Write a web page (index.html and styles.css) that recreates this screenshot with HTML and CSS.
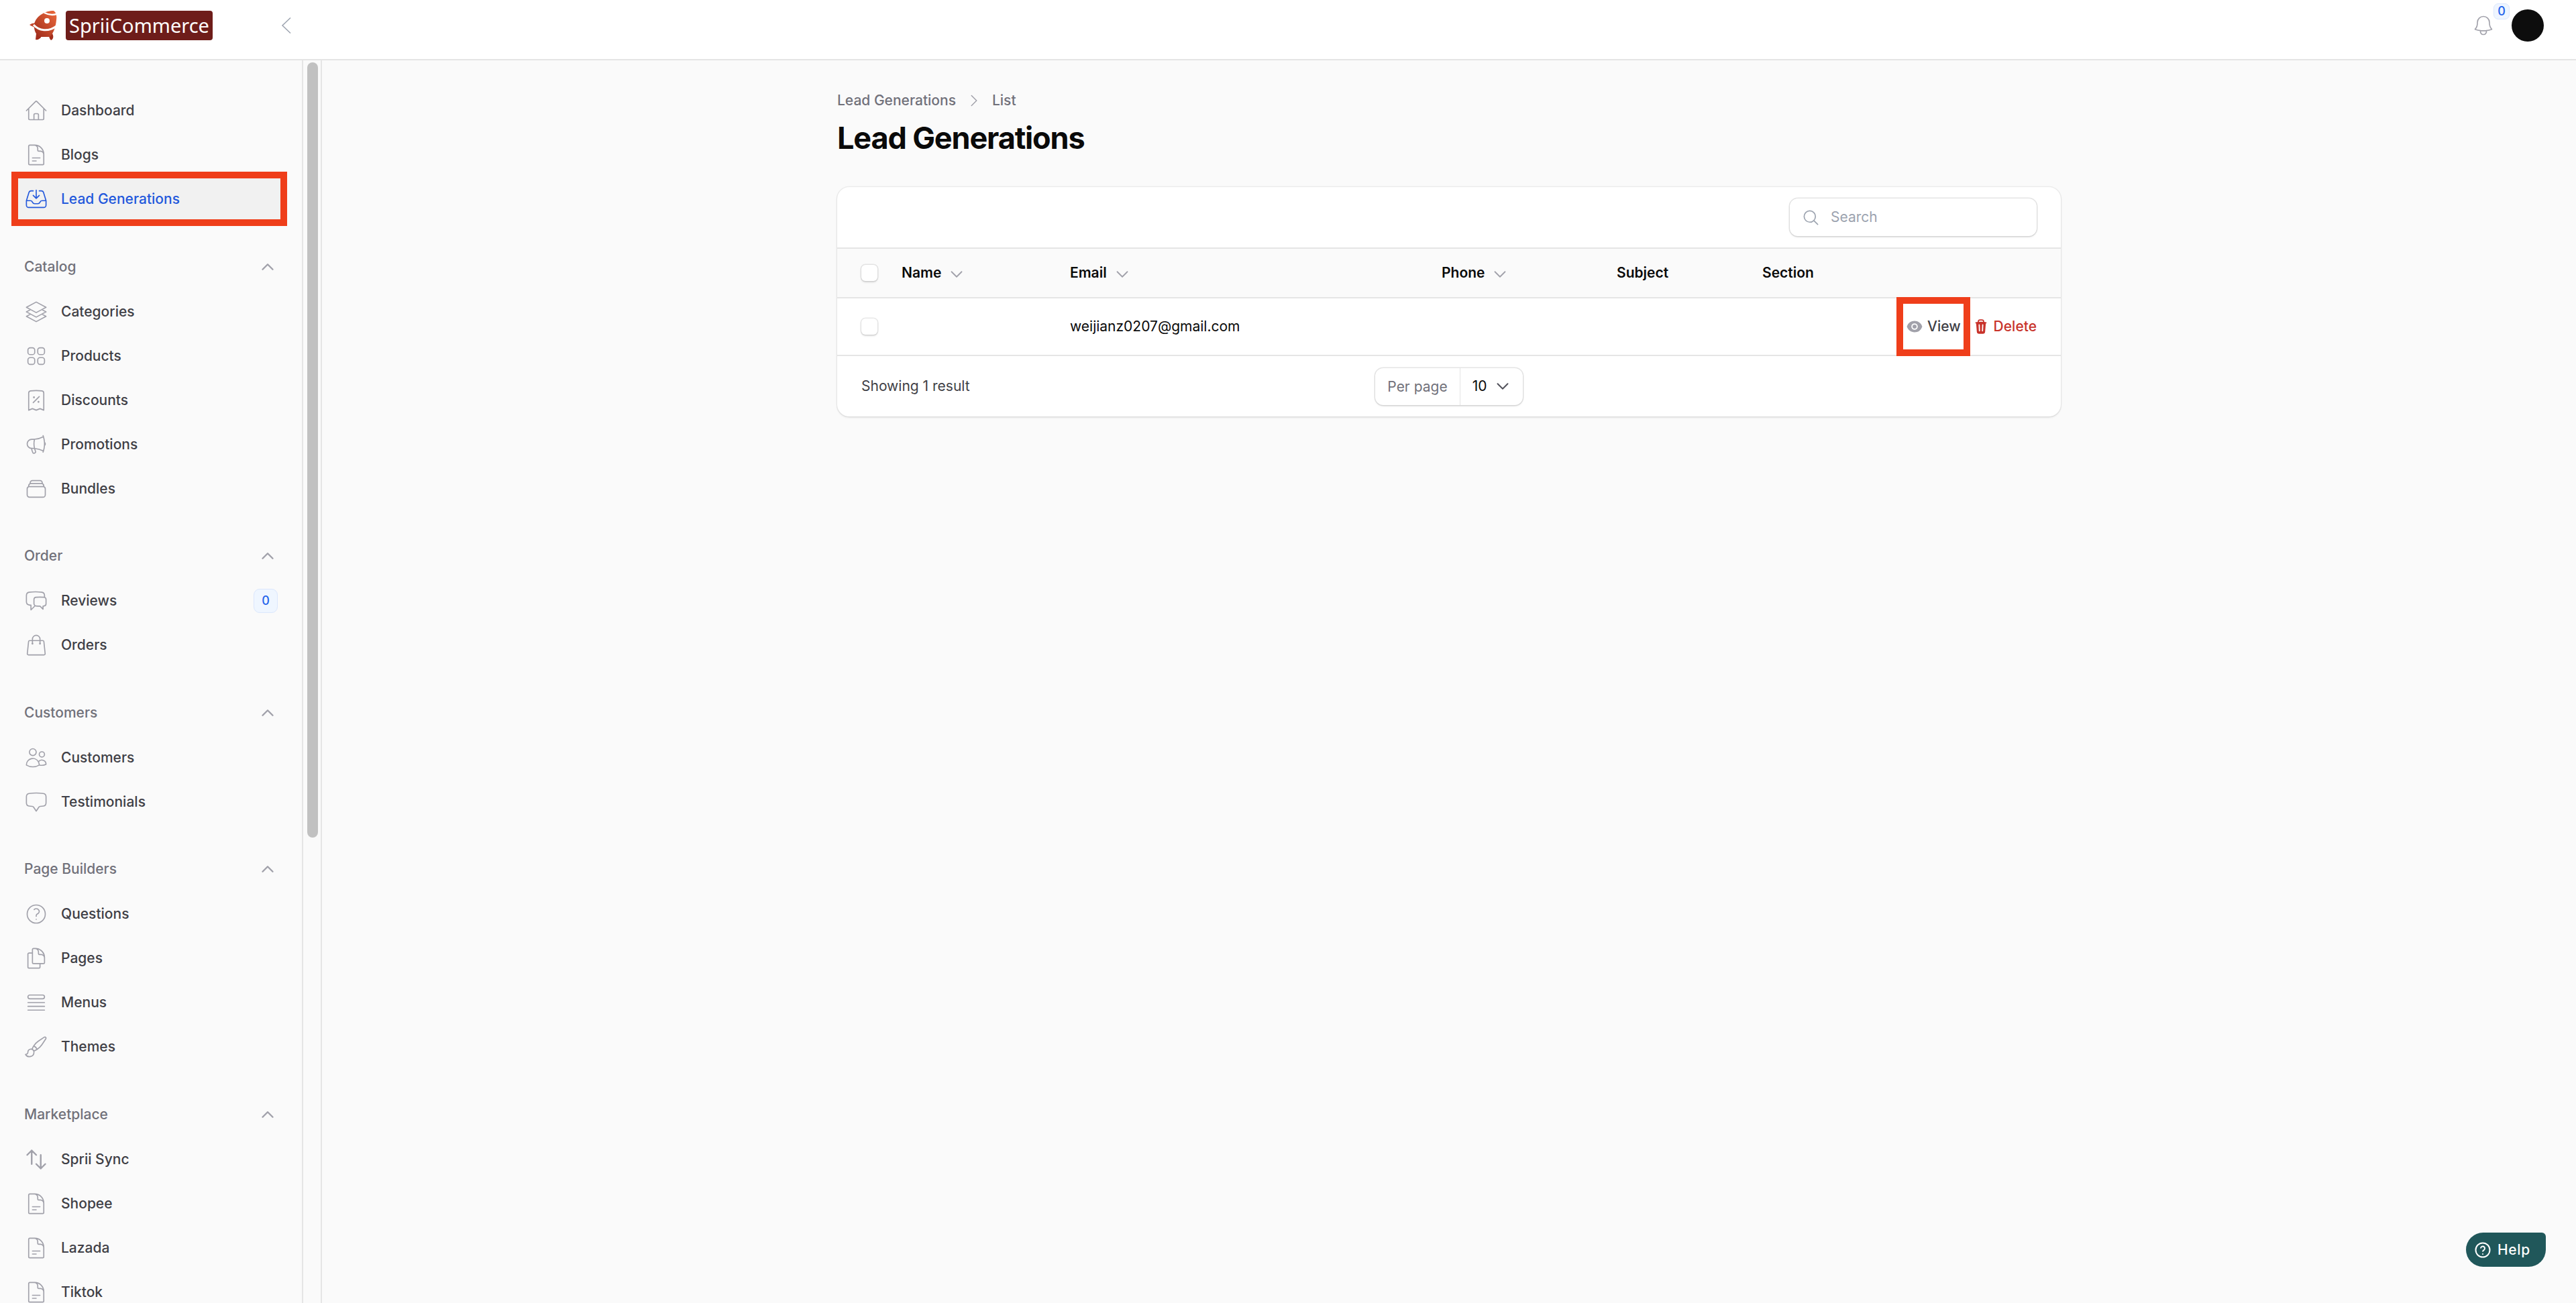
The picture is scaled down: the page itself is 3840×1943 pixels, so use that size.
FILE: index.html
```html
<!DOCTYPE html>
<html lang="en">
<head>
    <meta charset="UTF-8">
    <meta name="viewport" content="width=device-width, initial-scale=1.0">
    <title>Lead Generations - SpriiCommerce</title>
    <link rel="stylesheet" href="styles.css">
</head>
<body>
    <!-- icon sprite -->
    <svg class="sprite" aria-hidden="true">
        <symbol id="i-home" viewBox="0 0 24 24"><path d="M2.25 12l8.954-8.955c.44-.439 1.152-.439 1.591 0L21.75 12M4.5 9.75v10.125c0 .621.504 1.125 1.125 1.125H9.75v-4.875c0-.621.504-1.125 1.125-1.125h2.25c.621 0 1.125.504 1.125 1.125V21h4.125c.621 0 1.125-.504 1.125-1.125V9.75M8.25 21h8.25"/></symbol>
        <symbol id="i-doc" viewBox="0 0 24 24"><path d="M19.5 14.25v-2.625a3.375 3.375 0 00-3.375-3.375h-1.5A1.125 1.125 0 0113.5 7.125v-1.5a3.375 3.375 0 00-3.375-3.375H8.25m0 12.75h7.5m-7.5 3H12M10.5 2.25H5.625c-.621 0-1.125.504-1.125 1.125v17.25c0 .621.504 1.125 1.125 1.125h12.75c.621 0 1.125-.504 1.125-1.125V11.25a9 9 0 00-9-9z"/></symbol>
        <symbol id="i-inbox" viewBox="0 0 24 24"><path d="M9 3.75H6.912a2.25 2.25 0 00-2.15 1.588L2.35 13.177a2.25 2.25 0 00-.1.661V18a2.25 2.25 0 002.25 2.25h15A2.25 2.25 0 0021.75 18v-4.162c0-.224-.034-.447-.1-.661L19.24 5.338a2.25 2.25 0 00-2.15-1.588H15M2.25 13.5h3.86a2.25 2.25 0 012.012 1.244l.256.512a2.25 2.25 0 002.013 1.244h3.218a2.25 2.25 0 002.013-1.244l.256-.512a2.25 2.25 0 012.013-1.244h3.859M12 3v8.25m0 0l-3-3m3 3l3-3"/></symbol>
        <symbol id="i-stack" viewBox="0 0 24 24"><path d="M6.429 9.75L2.25 12l4.179 2.25m0-4.5l5.571 3 5.571-3m-11.142 0L2.25 7.5 12 2.25l9.75 5.25-4.179 2.25m0 0L21.75 12l-4.179 2.25m0 0l4.179 2.25L12 21.75 2.25 16.5l4.179-2.25m11.142 0l-5.571 3-5.571-3"/></symbol>
        <symbol id="i-squares" viewBox="0 0 24 24"><path d="M3.75 6A2.25 2.25 0 016 3.75h2.25A2.25 2.25 0 0110.5 6v2.25a2.25 2.25 0 01-2.25 2.25H6a2.25 2.25 0 01-2.25-2.25V6zM3.75 15.75A2.25 2.25 0 016 13.5h2.25a2.25 2.25 0 012.25 2.25V18a2.25 2.25 0 01-2.25 2.25H6A2.25 2.25 0 013.75 18v-2.25zM13.5 6a2.25 2.25 0 012.25-2.25H18A2.25 2.25 0 0120.25 6v2.25A2.25 2.25 0 0118 10.5h-2.25a2.25 2.25 0 01-2.25-2.25V6zM13.5 15.75a2.25 2.25 0 012.25-2.25H18a2.25 2.25 0 012.25 2.25V18A2.25 2.25 0 0118 20.25h-2.25A2.25 2.25 0 0113.5 18v-2.25z"/></symbol>
        <symbol id="i-receipt" viewBox="0 0 24 24"><path d="M9 14.25l6-6m4.5-3.493V21.75l-3.75-1.5-3.75 1.5-3.75-1.5-3.75 1.5V4.757c0-1.108.806-2.057 1.907-2.185a48.507 48.507 0 0111.186 0c1.1.128 1.907 1.077 1.907 2.185zM9.75 9h.008v.008H9.75V9zm.375 0a.375.375 0 11-.75 0 .375.375 0 01.75 0zm4.125 4.5h.008v.008h-.008V13.5zm.375 0a.375.375 0 11-.75 0 .375.375 0 01.75 0z"/></symbol>
        <symbol id="i-megaphone" viewBox="0 0 24 24"><path d="M10.34 15.84c-.688-.06-1.386-.09-2.09-.09H7.5a4.5 4.5 0 110-9h.75c.704 0 1.402-.03 2.09-.09m0 9.18c.253.962.584 1.892.985 2.783.247.55.06 1.21-.463 1.511l-.657.38c-.551.318-1.26.117-1.527-.461a20.845 20.845 0 01-1.44-4.282m3.102.069a18.03 18.03 0 01-.59-4.59c0-1.586.205-3.124.59-4.59m0 9.18a23.848 23.848 0 018.835 2.535M10.34 6.66a23.847 23.847 0 008.835-2.535m0 0A23.74 23.74 0 0018.795 3m.38 1.125a23.91 23.91 0 011.014 5.395m-1.014 8.855c-.118.38-.245.754-.38 1.125m.38-1.125a23.91 23.91 0 001.014-5.395m0-3.46c.495.413.811 1.035.811 1.73 0 .695-.316 1.317-.811 1.73m0-3.46a24.347 24.347 0 010 3.46"/></symbol>
        <symbol id="i-rect-stack" viewBox="0 0 24 24"><path d="M6 6.878V6a2.25 2.25 0 012.25-2.25h7.5A2.25 2.25 0 0118 6v.878m-12 0c.235-.083.487-.128.75-.128h10.5c.263 0 .515.045.75.128m-12 0A2.25 2.25 0 004.5 9v.878m13.5-3A2.25 2.25 0 0119.5 9v.878m0 0a2.246 2.246 0 00-.75-.128H5.25c-.263 0-.515.045-.75.128m15 0A2.25 2.25 0 0121 12v6a2.25 2.25 0 01-2.25 2.25H5.25A2.25 2.25 0 013 18v-6c0-.98.626-1.813 1.5-2.122"/></symbol>
        <symbol id="i-chats" viewBox="0 0 24 24"><path d="M20.25 8.511c.884.284 1.5 1.128 1.5 2.097v4.286c0 1.136-.847 2.1-1.98 2.193-.34.027-.68.052-1.02.072v3.091l-3-3c-1.354 0-2.694-.055-4.02-.163a2.115 2.115 0 01-.825-.242m9.345-8.334a2.126 2.126 0 00-.476-.095 48.64 48.64 0 00-8.048 0c-1.131.094-1.976 1.057-1.976 2.192v4.286c0 .837.46 1.58 1.155 1.951m9.345-8.334V6.637c0-1.621-1.152-3.026-2.76-3.235A48.455 48.455 0 0011.25 3c-2.115 0-4.198.137-6.24.402-1.608.209-2.76 1.614-2.76 3.235v6.226c0 1.621 1.152 3.026 2.76 3.235.577.075 1.157.14 1.74.194V21l4.155-4.155"/></symbol>
        <symbol id="i-bag" viewBox="0 0 24 24"><path d="M15.75 10.5V6a3.75 3.75 0 10-7.5 0v4.5m11.356-1.993l1.263 12c.07.665-.45 1.243-1.119 1.243H4.25a1.125 1.125 0 01-1.12-1.243l1.264-12A1.125 1.125 0 015.513 7.5h12.974c.576 0 1.059.435 1.119 1.007zM8.625 10.5a.375.375 0 11-.75 0 .375.375 0 01.75 0zm7.5 0a.375.375 0 11-.75 0 .375.375 0 01.75 0z"/></symbol>
        <symbol id="i-users" viewBox="0 0 24 24"><path d="M15 19.128a9.38 9.38 0 002.625.372 9.337 9.337 0 004.121-.952 4.125 4.125 0 00-7.533-2.493M15 19.128v-.003c0-1.113-.285-2.16-.786-3.07M15 19.128v.106A12.318 12.318 0 018.624 21c-2.331 0-4.512-.645-6.374-1.766l-.001-.109a6.375 6.375 0 0111.964-3.07M12 6.375a3.375 3.375 0 11-6.75 0 3.375 3.375 0 016.75 0zm8.25 2.25a2.625 2.625 0 11-5.25 0 2.625 2.625 0 015.25 0z"/></symbol>
        <symbol id="i-chat" viewBox="0 0 24 24"><path d="M2.25 12.76c0 1.6 1.123 2.994 2.707 3.227 1.068.157 2.148.279 3.238.364.466.037.893.281 1.153.671L12 21l2.652-3.978c.26-.39.687-.634 1.153-.67 1.09-.086 2.17-.208 3.238-.365 1.584-.233 2.707-1.626 2.707-3.228V6.741c0-1.602-1.123-2.995-2.707-3.228A48.394 48.394 0 0012 3c-2.392 0-4.744.175-7.043.513C3.373 3.746 2.25 5.14 2.25 6.741v6.018z"/></symbol>
        <symbol id="i-question" viewBox="0 0 24 24"><path d="M9.879 7.519c1.171-1.025 3.071-1.025 4.242 0 1.172 1.025 1.172 2.687 0 3.712-.203.179-.43.326-.67.442-.745.361-1.45.999-1.45 1.827v.75M21 12a9 9 0 11-18 0 9 9 0 0118 0zm-9 5.25h.008v.008H12v-.008z"/></symbol>
        <symbol id="i-pages" viewBox="0 0 24 24"><path d="M15.75 17.25v3.375c0 .621-.504 1.125-1.125 1.125h-9.75a1.125 1.125 0 01-1.125-1.125V7.875c0-.621.504-1.125 1.125-1.125H6.75a9.06 9.06 0 011.5.124m7.5 10.376h3.375c.621 0 1.125-.504 1.125-1.125V11.25c0-4.46-3.243-8.161-7.5-8.876a9.06 9.06 0 00-1.5-.124H9.375c-.621 0-1.125.504-1.125 1.125v3.5m7.5 10.375H9.375a1.125 1.125 0 01-1.125-1.125v-9.25m12 6.625v-1.875a3.375 3.375 0 00-3.375-3.375h-1.5a1.125 1.125 0 01-1.125-1.125v-1.5a3.375 3.375 0 00-3.375-3.375H9.75"/></symbol>
        <symbol id="i-queue" viewBox="0 0 24 24"><path d="M3.75 12h16.5m-16.5 3.75h16.5m-16.5 3.75h16.5M5.625 4.5h12.75a1.875 1.875 0 010 3.75H5.625a1.875 1.875 0 010-3.75z"/></symbol>
        <symbol id="i-brush" viewBox="0 0 24 24"><path d="M9.53 16.122a3 3 0 00-5.78 1.128 2.25 2.25 0 01-2.4 2.245 4.5 4.5 0 008.4-2.245c0-.399-.078-.78-.22-1.128zm0 0a15.998 15.998 0 003.388-1.62m-5.043-.025a15.994 15.994 0 011.622-3.395m3.42 3.42a15.995 15.995 0 004.764-4.648l3.876-5.814a1.151 1.151 0 00-1.597-1.597L14.146 6.32a15.996 15.996 0 00-4.649 4.763m3.42 3.42a6.776 6.776 0 00-3.42-3.42"/></symbol>
        <symbol id="i-updown" viewBox="0 0 24 24"><path d="M3 7.5L7.5 3m0 0L12 7.5M7.5 3v13.5m13.5 0L16.5 21m0 0L12 16.5m4.5 4.5V7.5"/></symbol>
        <symbol id="i-bell" viewBox="0 0 24 24"><path d="M14.857 17.082a23.848 23.848 0 005.454-1.31A8.967 8.967 0 0118 9.75v-.7V9A6 6 0 006 9v.75a8.967 8.967 0 01-2.312 6.022c1.733.64 3.56 1.085 5.455 1.31m5.714 0a24.255 24.255 0 01-5.714 0m5.714 0a3 3 0 11-5.714 0"/></symbol>
        <symbol id="i-search" viewBox="0 0 24 24"><path d="M21 21l-5.197-5.197m0 0A7.5 7.5 0 105.196 5.196a7.5 7.5 0 0010.607 10.607z"/></symbol>
        <symbol id="i-up" viewBox="0 0 24 24"><path d="M4.5 15.75l7.5-7.5 7.5 7.5"/></symbol>
        <symbol id="i-down" viewBox="0 0 24 24"><path d="M19.5 8.25l-7.5 7.5-7.5-7.5"/></symbol>
    </svg>

    <header class="topbar">
        <svg class="rocket" viewBox="0 0 41 44">
            <defs>
                <linearGradient id="rocket-fill" x1="1" y1="0" x2="0" y2="1">
                    <stop offset="0" stop-color="#ee6a3c"/>
                    <stop offset="1" stop-color="#9c2a1a"/>
                </linearGradient>
            </defs>
            <path d="M0 21c4-3 8-3 10-2l1 9c-4-4-8-5-11-7z" fill="#c2452a"/>
            <path d="M10 34l8 4c-2 4-6 6-9 5z" fill="#a32d1c"/>
            <path d="M29 36l5-2c2 4 2 8-2 10-2-2-3-4-3-8z" fill="#a32d1c"/>
            <path d="M36 0C24 0 10 7 7 20c-1 9 3 18 10 19h13c5-4 9-14 10-25 1-6 0-11-4-14z" fill="url(#rocket-fill)"/>
            <path d="M22 3c6 3 12 4 18 2" fill="none" stroke="#fff" stroke-width="2.5"/>
            <path d="M6 21c8 9 22 11 34 2" fill="none" stroke="#fff" stroke-width="3"/>
            <circle cx="26" cy="15" r="4" fill="#fff"/>
        </svg>
        <div class="brand">SpriiCommerce</div>
        <svg class="collapse-toggle" viewBox="0 0 16 26"><path d="M14 1.5L2 13l12 11.5"/></svg>
        <div class="topbar-right">
            <div class="bell">
                <svg class="icon icon-bell"><use href="#i-bell"/></svg>
                <span class="badge bell-badge">0</span>
            </div>
            <div class="avatar"></div>
        </div>
    </header>

    <div class="layout">
        <aside class="sidebar">
            <nav class="nav-group">
                <a class="nav-item"><svg class="icon"><use href="#i-home"/></svg><span>Dashboard</span></a>
                <a class="nav-item"><svg class="icon"><use href="#i-doc"/></svg><span>Blogs</span></a>
                <a class="nav-item active"><svg class="icon"><use href="#i-inbox"/></svg><span>Lead Generations</span><i class="callout nav-callout"></i></a>
            </nav>

            <nav class="nav-group">
                <div class="nav-label">Catalog<svg class="icon-sm"><use href="#i-up"/></svg></div>
                <a class="nav-item"><svg class="icon"><use href="#i-stack"/></svg><span>Categories</span></a>
                <a class="nav-item"><svg class="icon"><use href="#i-squares"/></svg><span>Products</span></a>
                <a class="nav-item"><svg class="icon"><use href="#i-receipt"/></svg><span>Discounts</span></a>
                <a class="nav-item"><svg class="icon"><use href="#i-megaphone"/></svg><span>Promotions</span></a>
                <a class="nav-item"><svg class="icon"><use href="#i-rect-stack"/></svg><span>Bundles</span></a>
            </nav>

            <nav class="nav-group">
                <div class="nav-label">Order<svg class="icon-sm"><use href="#i-up"/></svg></div>
                <a class="nav-item"><svg class="icon"><use href="#i-chats"/></svg><span>Reviews</span><span class="badge nav-badge">0</span></a>
                <a class="nav-item"><svg class="icon"><use href="#i-bag"/></svg><span>Orders</span></a>
            </nav>

            <nav class="nav-group">
                <div class="nav-label">Customers<svg class="icon-sm"><use href="#i-up"/></svg></div>
                <a class="nav-item"><svg class="icon"><use href="#i-users"/></svg><span>Customers</span></a>
                <a class="nav-item"><svg class="icon"><use href="#i-chat"/></svg><span>Testimonials</span></a>
            </nav>

            <nav class="nav-group">
                <div class="nav-label">Page Builders<svg class="icon-sm"><use href="#i-up"/></svg></div>
                <a class="nav-item"><svg class="icon"><use href="#i-question"/></svg><span>Questions</span></a>
                <a class="nav-item"><svg class="icon"><use href="#i-pages"/></svg><span>Pages</span></a>
                <a class="nav-item"><svg class="icon"><use href="#i-queue"/></svg><span>Menus</span></a>
                <a class="nav-item"><svg class="icon"><use href="#i-brush"/></svg><span>Themes</span></a>
            </nav>

            <nav class="nav-group">
                <div class="nav-label">Marketplace<svg class="icon-sm"><use href="#i-up"/></svg></div>
                <a class="nav-item"><svg class="icon icon-bold"><use href="#i-updown"/></svg><span>Sprii Sync</span></a>
                <a class="nav-item"><svg class="icon"><use href="#i-doc"/></svg><span>Shopee</span></a>
                <a class="nav-item"><svg class="icon"><use href="#i-doc"/></svg><span>Lazada</span></a>
                <a class="nav-item"><svg class="icon"><use href="#i-doc"/></svg><span>Tiktok</span></a>
            </nav>
        </aside>

        <div class="scroll-track"><div class="scroll-thumb"></div></div>

        <main class="main">
            <div class="content">
                <div class="breadcrumb">
                    <span>Lead Generations</span>
                    <svg class="crumb-sep"><use href="#i-up"/></svg>
                    <span>List</span>
                </div>
                <h1 class="page-title">Lead Generations</h1>

                <section class="card">
                    <div class="toolbar">
                        <div class="search">
                            <svg class="icon icon-search"><use href="#i-search"/></svg>
                            <span>Search</span>
                        </div>
                    </div>
                    <table class="leads">
                        <colgroup>
                            <col class="col-check"><col class="col-name"><col class="col-email"><col class="col-phone"><col class="col-subject"><col class="col-section"><col>
                        </colgroup>
                        <thead>
                            <tr>
                                <th class="check-cell"><span class="checkbox"></span></th>
                                <th><span class="sort">Name<svg class="icon-sort"><use href="#i-down"/></svg></span></th>
                                <th><span class="sort">Email<svg class="icon-sort"><use href="#i-down"/></svg></span></th>
                                <th><span class="sort">Phone<svg class="icon-sort"><use href="#i-down"/></svg></span></th>
                                <th>Subject</th>
                                <th>Section</th>
                                <th></th>
                            </tr>
                        </thead>
                        <tbody>
                            <tr>
                                <td class="check-cell"><span class="checkbox"></span></td>
                                <td></td>
                                <td>weijianz0207@gmail.com</td>
                                <td></td>
                                <td></td>
                                <td></td>
                                <td>
                                    <div class="actions">
                                        <a class="action action-view">
                                            <svg class="action-icon" viewBox="0 0 20 20"><path d="M10 12.5a2.5 2.5 0 100-5 2.5 2.5 0 000 5z"/><path fill-rule="evenodd" d="M.664 10.59a1.651 1.651 0 010-1.186A10.004 10.004 0 0110 3c4.257 0 7.893 2.66 9.336 6.41.147.381.146.804 0 1.186A10.004 10.004 0 0110 17c-4.257 0-7.893-2.66-9.336-6.41zM14 10a4 4 0 11-8 0 4 4 0 018 0z"/></svg>
                                            View
                                            <i class="callout view-callout"></i>
                                        </a>
                                        <a class="action action-delete">
                                            <svg class="action-icon" viewBox="0 0 20 20"><path fill-rule="evenodd" d="M8.75 1A2.75 2.75 0 006 3.75v.443c-.795.077-1.584.176-2.365.298a.75.75 0 10.23 1.482l.149-.022.841 10.518A2.75 2.75 0 007.596 19h4.807a2.75 2.75 0 002.742-2.53l.841-10.52.149.023a.75.75 0 00.23-1.482A41.03 41.03 0 0014 4.193V3.75A2.75 2.75 0 0011.25 1h-2.5zM10 4c.84 0 1.673.025 2.5.075V3.75c0-.69-.56-1.25-1.25-1.25h-2.5c-.69 0-1.25.56-1.25 1.25v.325C8.327 4.025 9.16 4 10 4zM8.58 7.72a.75.75 0 00-1.5.06l.3 7.5a.75.75 0 101.5-.06l-.3-7.5zm4.34.06a.75.75 0 10-1.5-.06l-.3 7.5a.75.75 0 101.5.06l.3-7.5z"/></svg>
                                            Delete
                                        </a>
                                    </div>
                                </td>
                            </tr>
                        </tbody>
                    </table>
                    <div class="table-footer">
                        <span>Showing 1 result</span>
                        <div class="per-page">
                            <span class="per-page-label">Per page</span>
                            <span class="per-page-value">10<svg class="icon-sort"><use href="#i-down"/></svg></span>
                        </div>
                        <span></span>
                    </div>
                </section>
            </div>
        </main>
    </div>

    <a class="help-button">
        <svg class="help-icon" viewBox="0 0 24 24"><circle cx="12" cy="12" r="10.5"/><path d="M9 9.5a3 3 0 115 2.2c-1.1.9-2 1.4-2 2.8"/><circle class="help-dot" cx="12" cy="18" r="1"/></svg>
        Help
    </a>
</body>
</html>
```

FILE: styles.css
```css
* {
    box-sizing: border-box;
}

html, body {
    height: 100%;
}

body {
    margin: 0;
    height: 100vh;
    overflow: hidden;
    display: flex;
    flex-direction: column;
    background-color: #fafafa;
    color: #0a0a0a;
    font-family: 'Inter', 'Liberation Sans', sans-serif;
    font-size: 21px;
    line-height: 30px;
}

.sprite {
    display: none;
}

.icon {
    width: 36px;
    height: 36px;
    flex-shrink: 0;
    fill: none;
    stroke: #a1a1aa;
    stroke-width: 1.1;
    stroke-linecap: round;
    stroke-linejoin: round;
}

.icon-bold {
    stroke-width: 1.6;
}

.icon-sm {
    width: 24px;
    height: 24px;
    margin-right: 3px;
    fill: none;
    stroke: #a1a1aa;
    stroke-width: 2.4;
    stroke-linecap: round;
    stroke-linejoin: round;
}

.icon-sort {
    width: 24px;
    height: 24px;
    margin-top: 3px;
    fill: none;
    stroke: #a1a1aa;
    stroke-width: 1.8;
    stroke-linecap: round;
    stroke-linejoin: round;
}

/* top bar */
.topbar {
    flex-shrink: 0;
    height: 90px;
    padding: 0 48px 12px 44px;
    display: flex;
    align-items: center;
    background-color: #fff;
    border-bottom: 2px solid #e5e5e5;
}

.rocket {
    width: 41px;
    height: 44px;
    flex-shrink: 0;
}

.brand {
    margin-left: 13px;
    width: 219px;
    height: 44px;
    display: flex;
    align-items: center;
    justify-content: center;
    background-color: #6e1d1a;
    border-radius: 4px;
    color: #fff;
    font-family: 'Noto Sans', 'Open Sans', sans-serif;
    font-size: 29px;
    line-height: 44px;
}

.collapse-toggle {
    margin-left: 102px;
    width: 16px;
    height: 26px;
    fill: none;
    stroke: #9ca3af;
    stroke-width: 1.5;
}

.topbar-right {
    margin-left: auto;
    display: flex;
    align-items: center;
    gap: 24px;
}

.bell {
    position: relative;
    width: 36px;
    height: 36px;
}

.icon-bell {
    display: block;
}

.badge {
    display: flex;
    align-items: center;
    justify-content: center;
    background-color: #eff6ff;
    border: 1.5px solid #dbe7fd;
    color: #2563eb;
    font-size: 18px;
    font-weight: 500;
}

.bell-badge {
    position: absolute;
    top: -15px;
    left: 33px;
    width: 24px;
    height: 24px;
    border-radius: 7px;
}

.avatar {
    width: 48px;
    height: 48px;
    border-radius: 50%;
    background-color: #0d0d0d;
}

/* layout */
.layout {
    flex: 1;
    min-height: 0;
    display: flex;
}

.sidebar {
    width: 452px;
    flex-shrink: 0;
    padding: 42px 24px 0;
    border-right: 2px solid #e5e5e5;
    overflow: hidden;
    display: flex;
    flex-direction: column;
    gap: 52.5px;
}

.nav-group {
    flex-shrink: 0;
}

.nav-label {
    height: 30px;
    margin-bottom: 19px;
    padding: 0 12px;
    display: flex;
    align-items: center;
    justify-content: space-between;
    color: #71717a;
    font-weight: 500;
}

.nav-item {
    position: relative;
    height: 66px;
    padding: 0 12px;
    display: flex;
    align-items: center;
    gap: 19px;
    border-radius: 9px;
    color: #3f3f46;
    font-weight: 500;
}

.nav-item.active {
    background-color: #f1f1f1;
    color: #2459dc;
}

.nav-item.active .icon {
    stroke: #2459dc;
}

.nav-badge {
    margin-left: auto;
    width: 36px;
    height: 36px;
    border-radius: 9px;
}

/* red annotation boxes drawn over the screenshot */
.callout {
    position: absolute;
    border: 10px solid #ef3e1a;
    pointer-events: none;
}

.nav-callout {
    top: -8px;
    left: -7px;
    right: -2px;
    bottom: -7px;
}

.view-callout {
    top: -29px;
    left: -15px;
    right: -14px;
    bottom: -29px;
}

.scroll-track {
    width: 28px;
    flex-shrink: 0;
    padding: 3px 6px 0 6px;
    border-right: 2px solid #e5e5e5;
}

.scroll-thumb {
    width: 16px;
    height: 1156px;
    border-radius: 8px;
    background-color: #c1c1c1;
}

/* main */
.main {
    flex: 1;
    min-width: 0;
}

.content {
    width: 1824px;
    margin: 0 auto;
    padding-top: 45px;
}

.breadcrumb {
    display: flex;
    align-items: center;
    gap: 18px;
    color: #71717a;
    font-size: 21px;
    line-height: 30px;
    font-weight: 500;
}

.crumb-sep {
    width: 24px;
    height: 24px;
    margin: 0 -3px;
    transform: rotate(90deg);
    fill: none;
    stroke: #a1a1aa;
    stroke-width: 1.5;
    stroke-linecap: round;
    stroke-linejoin: round;
}

.page-title {
    margin: 14px 0 46px;
    font-size: 45px;
    line-height: 54px;
    font-weight: 700;
    letter-spacing: -0.025em;
}

.card {
    background-color: #fff;
    border-radius: 18px;
    box-shadow: 0 0 0 1.5px rgba(10, 10, 10, 0.05), 0 1.5px 3px rgba(0, 0, 0, 0.08);
    overflow: hidden;
}

.toolbar {
    height: 90px;
    padding: 0 36px;
    display: flex;
    align-items: center;
    justify-content: flex-end;
}

.search {
    width: 368px;
    height: 56px;
    padding: 0 18px;
    display: flex;
    align-items: center;
    gap: 16px;
    border-radius: 12px;
    box-shadow: 0 0 0 1.5px rgba(10, 10, 10, 0.1), 0 1.5px 3px rgba(0, 0, 0, 0.08);
    color: #9ca3af;
}

.icon-search {
    width: 27px;
    height: 27px;
    stroke: #9ca3af;
    stroke-width: 1.5;
}

.leads {
    width: 100%;
    table-layout: fixed;
    border-collapse: separate;
    border-spacing: 0;
}

.col-check { width: 96px; }
.col-name { width: 251px; }
.col-email { width: 554px; }
.col-phone { width: 261px; }
.col-subject { width: 217px; }
.col-section { width: 197px; }

.leads th {
    height: 76px;
    padding: 0;
    text-align: left;
    font-weight: 600;
    background-color: #fafafa;
    border-top: 2px solid #e5e5e5;
    border-bottom: 2px solid #e5e5e5;
}

.leads td {
    height: 86px;
    padding: 0;
    color: #0a0a0a;
    border-bottom: 2px solid #e5e5e5;
}

.leads .check-cell {
    padding-left: 36px;
}

.checkbox {
    display: block;
    width: 24px;
    height: 24px;
    background-color: #fff;
    border-radius: 6px;
    box-shadow: 0 0 0 1.5px rgba(10, 10, 10, 0.08), 0 1.5px 3px rgba(0, 0, 0, 0.12);
}

.sort {
    display: inline-flex;
    align-items: center;
    gap: 11px;
}

.actions {
    padding-right: 36px;
    display: flex;
    align-items: center;
    justify-content: flex-end;
    gap: 18px;
}

.action {
    position: relative;
    display: inline-flex;
    align-items: center;
    gap: 7px;
    font-weight: 500;
}

.action-icon {
    width: 24px;
    height: 24px;
}

.action-view {
    color: #3f3f46;
}

.action-view .action-icon {
    fill: #a1a1aa;
}

.action-delete {
    color: #c8322a;
}

.action-delete .action-icon {
    fill: #c8322a;
}

.table-footer {
    height: 90px;
    padding: 0 36px;
    display: grid;
    grid-template-columns: 1fr auto 1fr;
    align-items: center;
    color: #3f3f46;
}

.per-page {
    height: 55px;
    display: flex;
    align-items: center;
    border-radius: 12px;
    box-shadow: 0 0 0 1.5px rgba(10, 10, 10, 0.1), 0 1.5px 3px rgba(0, 0, 0, 0.08);
}

.per-page-label {
    padding: 0 18px;
    line-height: 55px;
    color: #71717a;
    border-right: 1.5px solid #e5e5e5;
}

.per-page-value {
    width: 93px;
    padding-left: 18px;
    display: flex;
    align-items: center;
    gap: 12px;
    color: #0a0a0a;
}

.per-page-value .icon-sort {
    stroke: #52525b;
    stroke-width: 2;
    margin-top: 0;
}

/* floating help */
.help-button {
    position: fixed;
    right: 45px;
    bottom: 54px;
    width: 119px;
    height: 51px;
    padding-left: 13px;
    display: flex;
    align-items: center;
    gap: 10px;
    background-color: #20575a;
    border-radius: 26px 6px 26px 26px;
    color: #fff;
    font-weight: 500;
    letter-spacing: 0.03em;
}

.help-icon {
    width: 24px;
    height: 24px;
    flex-shrink: 0;
    fill: none;
    stroke: #fff;
    stroke-width: 2;
}

.help-dot {
    fill: #fff;
    stroke: none;
}
```
